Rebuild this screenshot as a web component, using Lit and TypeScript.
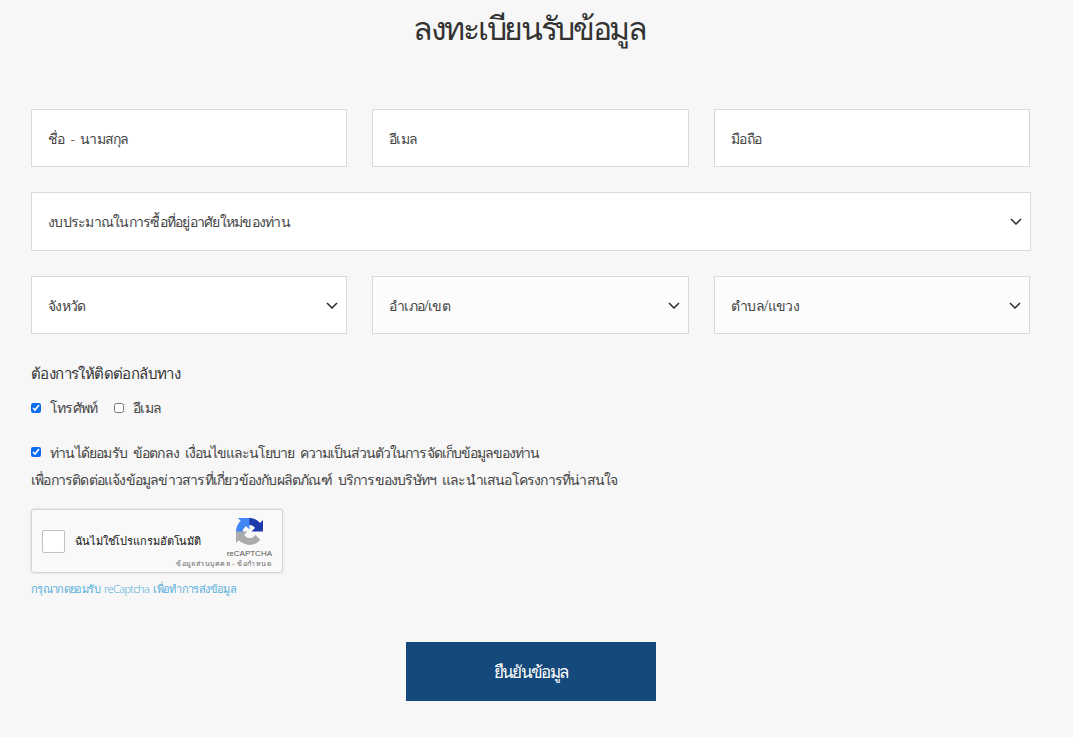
import { LitElement, html, css, svg } from "lit";
import { customElement } from "lit/decorators.js";

const chevron = html`<svg class="chev" width="12" height="7" viewBox="0 0 12 7" fill="none"><path d="M1 1l5 5 5-5" stroke="#2b2b2b" stroke-width="1.5"/></svg>`;

const logo = svg`<svg class="logo" width="27" height="27" viewBox="0 0 64 64">
  <path d="M64 31.955l-.033-1.37V4.687l-7.16 7.16C50.948 4.674 42.033.093 32.05.093c-10.4 0-19.622 4.96-25.458 12.64l11.736 11.86a15.55 15.55 0 0 1 4.754-5.334c2.05-1.6 4.952-2.906 8.968-2.906.485 0 .86.057 1.135.163 4.976.393 9.288 3.14 11.828 7.124l-8.307 8.307c10.522-.04 22.41-.066 27.295.005" fill="#1c3aa9"/>
  <path d="M31.862.094l-1.37.033H4.594l7.16 7.16C4.58 13.147 0 22.06 0 32.046c0 10.4 4.96 19.622 12.64 25.458L24.5 45.768a15.55 15.55 0 0 1-5.334-4.754c-1.6-2.05-2.906-4.952-2.906-8.968 0-.485.057-.86.163-1.135.393-4.976 3.14-9.288 7.124-11.828l8.307 8.307c-.04-10.522-.066-22.41.005-27.295" fill="#4285f4"/>
  <path d="M0 32.047l.033 1.37v25.898l7.16-7.16c5.86 7.173 14.774 11.754 24.76 11.754 10.4 0 19.622-4.96 25.458-12.64l-11.736-11.86a15.55 15.55 0 0 1-4.754 5.334c-2.05 1.6-4.952 2.906-8.968 2.906-.485 0-.86-.057-1.135-.163-4.976-.393-9.288-3.14-11.828-7.124l8.307-8.307c-10.522.04-22.41.066-27.295-.005" fill="#ababab"/>
</svg>`;

@customElement("app-root")
export class AppRoot extends LitElement {
  static styles = css`
    :host { display: block; height: 737px; overflow: hidden; background: #f7f7f7; color: #333;
      font-family: "Noto Sans", "Noto Sans CJK SC", sans-serif; }
    .page { width: 999px; padding-left: 31px; display: flex; flex-direction: column; }
    h1 { margin: 0; height: 109px; padding: 8px 2px 0 0; box-sizing: border-box; text-align: center; font-size: 32px; font-weight: 500; line-height: 40px; letter-spacing: -2.3px; color: #333; }
    .grid { display: grid; grid-template-columns: 316px 317px 316px; grid-template-rows: 58px 59px 58px; gap: 25px; }
    .wide { grid-column: 1 / -1; margin-right: -1px; }
    .field { box-sizing: border-box; border: 1px solid #d9d9d9; background: #fff; display: flex; align-items: center; justify-content: space-between; padding: 1px 8px 0 16px; font-size: 14px; font-weight: 300; letter-spacing: -0.75px; word-spacing: 3px; color: #444; }
    .field.soft { background: #fcfcfc; }
    .field .chev { margin-top: -1px; }
    .label { margin-top: 29px; font-size: 15px; font-weight: 500; line-height: 20px; letter-spacing: -0.6px; }
    .checks { display: flex; align-items: center; margin-top: 15px; font-size: 14px; font-weight: 300; line-height: 20px; letter-spacing: -0.8px; color: #444; }
    input[type="checkbox"] { width: 10px; height: 10px; margin: 0 9px 0 0; accent-color: #0a6cf0; }
    .checks span { margin-right: 17px; }
    .consent { margin-top: 21px; font-size: 14px; font-weight: 300; line-height: 27px; letter-spacing: -0.8px; word-spacing: 3px; color: #444; }
    .consent input { vertical-align: 1px; }
    .tight { letter-spacing: -0.97px; }
    .captcha { margin-top: 16px; width: 252px; height: 64px; box-sizing: border-box; background: #f9f9f9; border: 1px solid #d3d3d3; border-radius: 3px; box-shadow: 0 0 3px rgba(0,0,0,.12); display: flex; align-items: center; padding-left: 10px; position: relative; }
    .box { width: 23px; height: 23px; background: #fff; border: 1px solid #c1c1c1; border-radius: 2px; margin-right: 10px; box-sizing: border-box; }
    .not { font-size: 11px; color: #111; letter-spacing: -0.1px; }
    .brand { position: absolute; right: 10px; top: 8px; display: flex; flex-direction: column; align-items: center; gap: 4px; font-family: "Liberation Sans", sans-serif; font-size: 8px; line-height: 10px; color: #555; }
    .terms { position: absolute; right: 10px; bottom: 3px; font-size: 7px; letter-spacing: 0.45px; color: #666; }
    .hint { margin-top: 8px; font-size: 11px; font-weight: 300; line-height: 16px; letter-spacing: -0.65px; word-spacing: 2px; color: #5ab0dc; }
    .submit { align-self: center; margin-top: 45px; width: 250px; height: 59px; background: #15497b; color: #fff; font-size: 17px; font-weight: 500; letter-spacing: -1.7px; display: flex; align-items: center; justify-content: center; }
  `;

  render() {
    return html`<div class="page">
      <h1>ลงทะเบียนรับข้อมูล</h1>
      <div class="grid">
        <div class="field">ชื่อ - นามสกุล</div>
        <div class="field">อีเมล</div>
        <div class="field">มือถือ</div>
        <div class="field wide">งบประมาณในการซื้อที่อยู่อาศัยใหม่ของท่าน ${chevron}</div>
        <div class="field">จังหวัด ${chevron}</div>
        <div class="field soft">อำเภอ/เขต ${chevron}</div>
        <div class="field soft">ตำบล/แขวง ${chevron}</div>
      </div>
      <div class="label">ต้องการให้ติดต่อกลับทาง</div>
      <div class="checks">
        <input type="checkbox" checked /><span>โทรศัพท์</span>
        <input type="checkbox" /><span>อีเมล</span>
      </div>
      <div class="consent">
        <input type="checkbox" checked />ท่านได้ยอมรับ ข้อตกลง <span class="tight">เงื่อนไขและนโยบาย ความเป็นส่วนตัวในการจัดเก็บข้อมูลของท่าน</span><br />
        เพื่อการติดต่อแจ้งข้อมูลข่าวสารที่เกี่ยวข้องกับผลิตภัณฑ์ บริการของบริษัทฯ และนำเสนอโครงการที่น่าสนใจ
      </div>
      <div class="captcha">
        <div class="box"></div>
        <div class="not">ฉันไม่ใช่โปรแกรมอัตโนมัติ</div>
        <div class="brand">${logo}<div>reCAPTCHA</div></div>
        <div class="terms">ข้อมูลส่วนบุคคล - ข้อกำหนด</div>
      </div>
      <div class="hint">กรุณากดยอมรับ reCaptcha เพื่อทำการส่งข้อมูล</div>
      <div class="submit">ยืนยันข้อมูล</div>
    </div>`;
  }
}
